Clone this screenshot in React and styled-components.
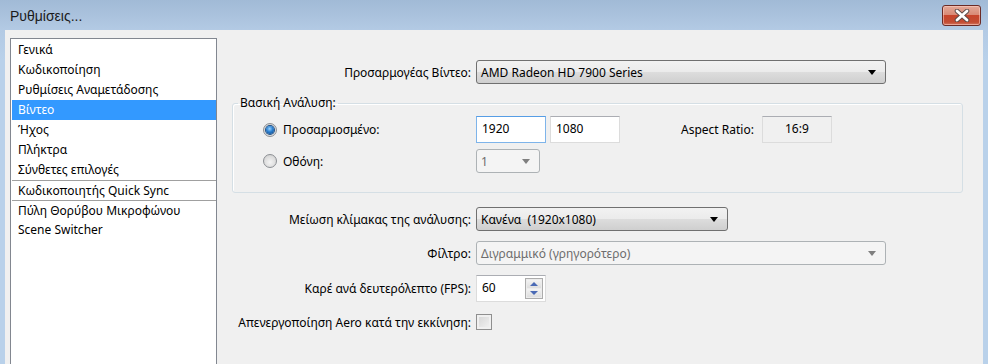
import React from 'react'
import styled, {createGlobalStyle} from 'styled-components'

const Global = createGlobalStyle`
    html, body {
        margin: 0;
        padding: 0;
        background: #b9d1ea;
    }
    body {
        font-family: "Noto Sans", "Liberation Sans", Arial, sans-serif;
        font-size: 12px;
        line-height: 15px;
        color: #000;
    }
`

const Frame = styled.div`
    width: 988px;
    height: 364px;
    overflow: hidden;
    display: flex;
    flex-direction: column;
    background: linear-gradient(#a1bad6 0px, #b3cae4 30px, #b9d1ea 60px);
`

const TitleBar = styled.div`
    height: 30px;
    flex: none;
    display: flex;
    align-items: flex-start;
    justify-content: space-between;
    padding: 0 7px 0 10px;
`

const Title = styled.div`
    font-family: "Liberation Sans", Arial, sans-serif;
    font-size: 14px;
    line-height: 15px;
    margin-top: 9px;
    color: #1b1b1b;
`

const CloseButton = styled.div`
    margin-top: 5px;
    width: 37px;
    height: 19px;
    border: 1px solid #6b2b26;
    border-radius: 3px;
    display: flex;
    align-items: center;
    justify-content: center;
    background: linear-gradient(#e3a898 0%, #d98a77 45%, #c7442c 50%, #c24c33 85%, #d27761 100%);
    box-shadow: inset 0 0 0 1px rgba(255, 210, 200, 0.55);
`

const Client = styled.div`
    flex: 1;
    margin: 0 5px;
    background: #f0f0f0;
    display: flex;
    align-items: flex-start;
    min-height: 0;
`

const List = styled.ul`
    list-style: none;
    margin: 8px 0 0 5px;
    padding: 1px 0 0 1px;
    width: 204px;
    height: 340px;
    flex: none;
    background: #fff;
    border: 1px solid #828790;
`

const Item = styled.li`
    height: ${p => (p.$sep ? 19 : 20)}px;
    line-height: ${p => (p.$sep ? 19 : 20)}px;
    padding-left: 6px;
    border-top: ${p => (p.$sep ? '1px solid #a0a0a0' : 'none')};
    background: ${p => (p.$active ? '#3399ff' : 'transparent')};
    color: ${p => (p.$active ? '#fff' : '#000')};
    white-space: nowrap;
`

const Content = styled.div`
    flex: 1;
    display: flex;
    flex-direction: column;
    padding-top: 30px;
`

const Row = styled.div`
    display: grid;
    grid-template-columns: 254px auto;
    column-gap: 5px;
    align-items: center;
    margin-top: ${p => p.$top || 0}px;
`

const Label = styled.span`
    text-align: right;
    white-space: nowrap;
`

const Combo = styled.div`
    box-sizing: border-box;
    width: ${p => p.$w}px;
    height: 24px;
    display: flex;
    align-items: center;
    justify-content: space-between;
    padding: 0 9px 0 4px;
    border: 1px solid ${p => (p.$disabled ? '#adb2b5' : '#707070')};
    border-radius: 3px;
    color: ${p => (p.$disabled ? '#6d6d6d' : '#000')};
    background: ${p => (p.$disabled
        ? '#f4f4f4'
        : 'linear-gradient(#f2f2f2 0%, #ebebeb 50%, #dddddd 50%, #cfcfcf 100%)')};
    white-space: pre;
`

const Arrow = styled.span`
    width: 0;
    height: 0;
    border-left: 4px solid transparent;
    border-right: 4px solid transparent;
    border-top: 5px solid ${p => (p.$disabled ? '#7f7f7f' : '#000')};
`

const Group = styled.fieldset`
    margin: 12px 0 0 15px;
    width: 729px;
    padding: 6px 0 19px 0;
    border: 1px solid #d5dfe5;
    border-radius: 3px;
    box-shadow: inset 1px 1px 0 #fff;
    display: flex;
    flex-direction: column;
    gap: 6px;
`

const Legend = styled.legend`
    margin-left: 5px;
    padding: 0 2px;
    line-height: 14px;
`

const GroupRow = styled.div`
    display: flex;
    align-items: center;
    padding-left: 30px;
`

const RadioLabel = styled.label`
    width: 213px;
    display: flex;
    align-items: center;
    gap: 6px;
`

const Radio = styled.span`
    box-sizing: border-box;
    width: 14px;
    height: 14px;
    border-radius: 50%;
    border: 1px solid #8c8f94;
    display: flex;
    align-items: center;
    justify-content: center;
    background: radial-gradient(circle at 50% 60%, #f4f4f4 0%, #dcdcdc 60%, #c9c9c9 100%);

    &::after {
        content: '';
        display: ${p => (p.$checked ? 'block' : 'none')};
        width: 8px;
        height: 8px;
        border-radius: 50%;
        background: radial-gradient(circle at 45% 35%, #9ad4ff 0%, #2a7fd0 45%, #0d3f7c 100%);
        box-shadow: 0 0 0 1px #1b4e86;
    }
`

const TextBox = styled.div`
    box-sizing: border-box;
    width: ${p => p.$w || 70}px;
    height: 27px;
    margin-right: ${p => p.$mr || 0}px;
    padding: 4px 0 0 5px;
    background: #fff;
    border: 1px solid ${p => (p.$focus ? '#7eb4ea' : '#dcdcdc')};
    border-top-color: ${p => (p.$focus ? '#569de5' : '#abadb3')};
    position: relative;
`

const SideLabel = styled.span`
    margin-right: 8px;
`

const ReadOnlyBox = styled.div`
    box-sizing: border-box;
    width: 70px;
    height: 27px;
    padding-top: 4px;
    text-align: center;
    border: 1px solid #dcdcdc;
    border-top-color: #abadb3;
    background: #f0f0f0;
`

const Spin = styled.div`
    position: absolute;
    right: 2px;
    top: 2px;
    bottom: 2px;
    width: 18px;
    display: flex;
    flex-direction: column;
    gap: 1px;
    border: 1px solid #acacac;
    box-sizing: border-box;
    padding: 1px;
    background: #ececec;
`

const SpinButton = styled.div`
    flex: 1;
    display: flex;
    align-items: center;
    justify-content: center;
    background: linear-gradient(#f3f3f3, #dedede);
`

const SpinArrow = styled.span`
    width: 0;
    height: 0;
    border-left: 4px solid transparent;
    border-right: 4px solid transparent;
    ${p => (p.$up ? 'border-bottom' : 'border-top')}: 4px solid #4a6ab5;
`

const Check = styled.span`
    box-sizing: border-box;
    width: 16px;
    height: 16px;
    border: 1px solid #8f8f8f;
    background: linear-gradient(135deg, #d4d4d4, #f4f4f4);
    box-shadow: inset 0 0 0 2px #f0f0f0;
`

const menu = [
    {name: 'Γενικά'},
    {name: 'Κωδικοποίηση'},
    {name: 'Ρυθμίσεις Αναμετάδοσης'},
    {name: 'Βίντεο', active: true},
    {name: 'Ήχος'},
    {name: 'Πλήκτρα'},
    {name: 'Σύνθετες επιλογές'},
    {name: 'Κωδικοποιητής Quick Sync', sep: true},
    {name: 'Πύλη Θορύβου Μικροφώνου', sep: true},
    {name: 'Scene Switcher'},
]

const CloseIcon = () => (
    <svg width="16" height="13" viewBox="0 0 16 13">
        <path d="M3 2 L13 11 M13 2 L3 11" stroke="#5a4a48" strokeWidth="4.6" strokeLinecap="round" />
        <path d="M3 2 L13 11 M13 2 L3 11" stroke="#fff" strokeWidth="2.8" strokeLinecap="round" />
    </svg>
)

export default function App() {
    return <Frame>
        <Global />
        <TitleBar>
            <Title>Ρυθμίσεις...</Title>
            <CloseButton><CloseIcon /></CloseButton>
        </TitleBar>
        <Client>
            <List>
                {menu.map(m => <Item key={m.name} $active={m.active} $sep={m.sep}>{m.name}</Item>)}
            </List>
            <Content>
                <Row>
                    <Label>Προσαρμογέας Βίντεο:</Label>
                    <Combo $w={410}>AMD Radeon HD 7900 Series<Arrow /></Combo>
                </Row>

                <Group>
                    <Legend>Βασική Ανάλυση:</Legend>
                    <GroupRow>
                        <RadioLabel><Radio $checked />Προσαρμοσμένο:</RadioLabel>
                        <TextBox $focus $mr={4}>1920</TextBox>
                        <TextBox $mr={61}>1080</TextBox>
                        <SideLabel>Aspect Ratio:</SideLabel>
                        <ReadOnlyBox>16:9</ReadOnlyBox>
                    </GroupRow>
                    <GroupRow>
                        <RadioLabel><Radio />Οθόνη:</RadioLabel>
                        <Combo $w={64} $disabled>1<Arrow $disabled /></Combo>
                    </GroupRow>
                </Group>

                <Row $top={14}>
                    <Label>Μείωση κλίμακας της ανάλυσης:</Label>
                    <Combo $w={252}>Κανένα  (1920x1080)<Arrow /></Combo>
                </Row>
                <Row $top={10}>
                    <Label>Φίλτρο:</Label>
                    <Combo $w={410} $disabled>Διγραμμικό (γρηγορότερο)<Arrow $disabled /></Combo>
                </Row>
                <Row $top={10}>
                    <Label>Καρέ ανά δευτερόλεπτο (FPS):</Label>
                    <TextBox>
                        60
                        <Spin>
                            <SpinButton><SpinArrow $up /></SpinButton>
                            <SpinButton><SpinArrow /></SpinButton>
                        </Spin>
                    </TextBox>
                </Row>
                <Row $top={12}>
                    <Label>Απενεργοποίηση Aero κατά την εκκίνηση:</Label>
                    <Check />
                </Row>
            </Content>
        </Client>
    </Frame>
}
